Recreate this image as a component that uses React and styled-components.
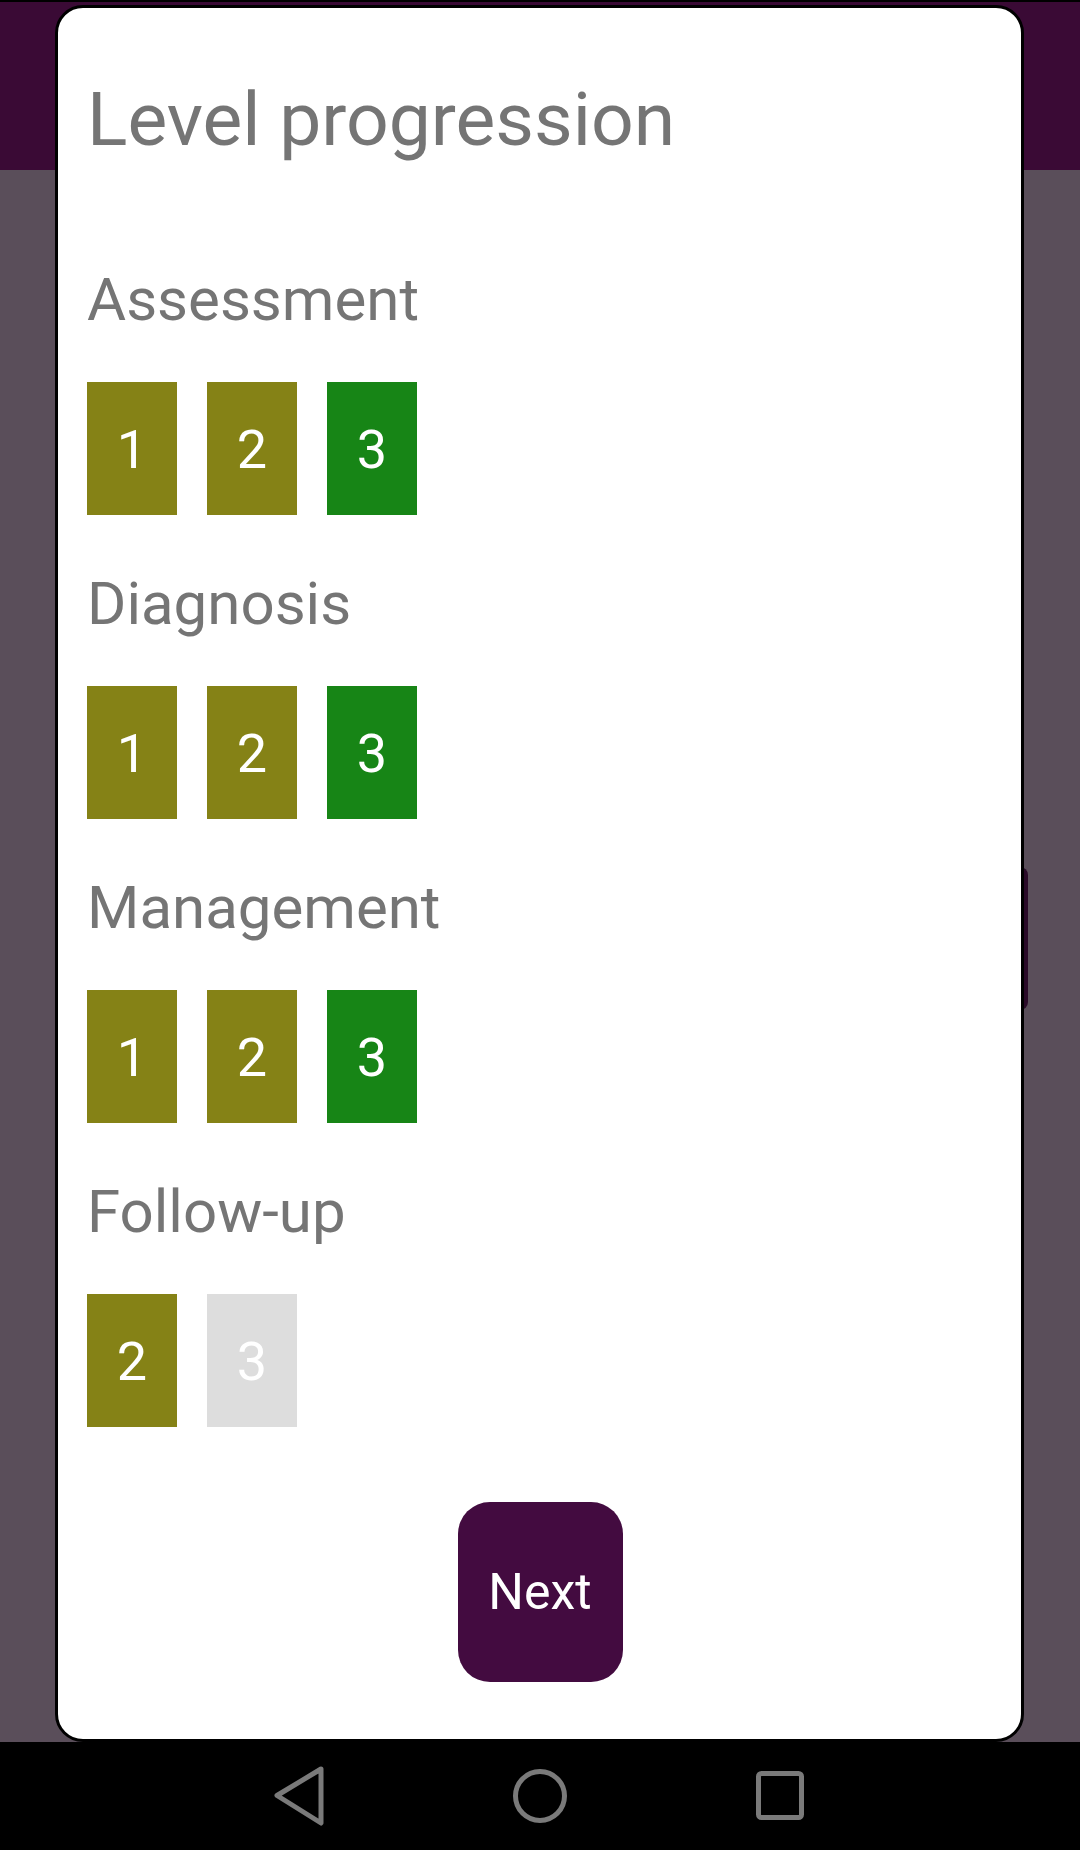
import React from "react";
import styled, { createGlobalStyle } from "styled-components";

const GlobalStyle = createGlobalStyle`
  html, body {
    margin: 0;
    padding: 0;
    background: #000;
  }
  body {
    font-family: Roboto, "Noto Sans", sans-serif;
  }
`;

const sections = [
  { name: "Assessment", levels: [1, 2, 3], current: 3 },
  { name: "Diagnosis", levels: [1, 2, 3], current: 3 },
  { name: "Management", levels: [1, 2, 3], current: 3 },
  { name: "Follow-up", levels: [2, 3], current: 0, locked: 3 },
];

const App = () => {
  return (
    <Screen>
      <GlobalStyle />
      <AppBar />
      <Body>
        <Fab />
      </Body>
      <NavBar>
        <NavIcon viewBox="0 0 60 60">
          <path d="M51 3 L7 29.5 L51 57 Z" />
        </NavIcon>
        <NavIcon viewBox="0 0 60 60">
          <circle cx="30" cy="30" r="24.5" />
        </NavIcon>
        <NavIcon viewBox="0 0 60 60">
          <rect x="8.5" y="7.5" width="43" height="44" rx="3" />
        </NavIcon>
      </NavBar>

      <Dialog>
        <Title>Level progression</Title>
        <Sections>
          {sections.map((s) => (
            <Section key={s.name}>
              <Label>{s.name}</Label>
              <Levels>
                {s.levels.map((lvl) => (
                  <Level
                    key={lvl}
                    $state={
                      lvl === s.locked
                        ? "locked"
                        : lvl === s.current
                        ? "current"
                        : "done"
                    }
                  >
                    {lvl}
                  </Level>
                ))}
              </Levels>
            </Section>
          ))}
        </Sections>
        <Footer>
          <NextButton>Next</NextButton>
        </Footer>
      </Dialog>
    </Screen>
  );
};

const Screen = styled.div`
  position: relative;
  width: 1080px;
  height: 1850px;
  display: flex;
  flex-direction: column;
  background: #5a4e5a;
  overflow: hidden;
`;

const AppBar = styled.div`
  height: 168px;
  border-top: 2px solid #000;
  background: #3a0a35;
`;

const Body = styled.div`
  position: relative;
  flex: 1;
`;

const Fab = styled.div`
  position: absolute;
  top: 697px;
  right: 52px;
  width: 140px;
  height: 143px;
  border-radius: 8px;
  background: #2a0a28;
`;

const NavBar = styled.div`
  height: 108px;
  background: #000;
  display: flex;
  align-items: center;
  justify-content: center;
  gap: 180px;
`;

const NavIcon = styled.svg`
  width: 60px;
  height: 60px;
  fill: none;
  stroke: #7a7a7a;
  stroke-width: 5;
  stroke-linejoin: round;
`;

const Dialog = styled.div`
  position: absolute;
  top: 5px;
  left: 55px;
  width: 969px;
  height: 1737px;
  box-sizing: border-box;
  border: 3px solid #000;
  border-radius: 28px;
  background: #fff;
  padding: 72px 30px 0 29px;
  display: flex;
  flex-direction: column;
`;

const Title = styled.h1`
  margin: 0;
  font-family: Roboto, sans-serif;
  font-weight: 400;
  font-size: 75px;
  line-height: 78px;
  color: #757575;
`;

const Sections = styled.div`
  margin-top: 111px;
  display: flex;
  flex-direction: column;
  gap: 58px;
`;

const Section = styled.div`
  display: flex;
  flex-direction: column;
  gap: 51px;
`;

const Label = styled.div`
  font-family: Roboto, sans-serif;
  font-size: 60px;
  line-height: 62px;
  color: #757575;
`;

const Levels = styled.div`
  display: flex;
  gap: 30px;
`;

const levelColors = {
  done: "#858216",
  current: "#178516",
  locked: "#dddddd",
};

const Level = styled.div`
  width: 90px;
  height: 133px;
  display: flex;
  align-items: center;
  justify-content: center;
  background: ${(p) => levelColors[p.$state]};
  color: #fff;
  font-family: Roboto, sans-serif;
  font-size: 54px;
  line-height: 1;
  padding-top: 3px;
  box-sizing: border-box;
`;

const Footer = styled.div`
  margin-top: 75px;
  display: flex;
  justify-content: center;
  padding-left: 2px;
`;

const NextButton = styled.button`
  width: 165px;
  height: 180px;
  border: none;
  border-radius: 32px;
  background: #430b40;
  color: #fff;
  font-family: Roboto, sans-serif;
  font-size: 50px;
  padding: 0;
  cursor: pointer;
`;

export default App;
